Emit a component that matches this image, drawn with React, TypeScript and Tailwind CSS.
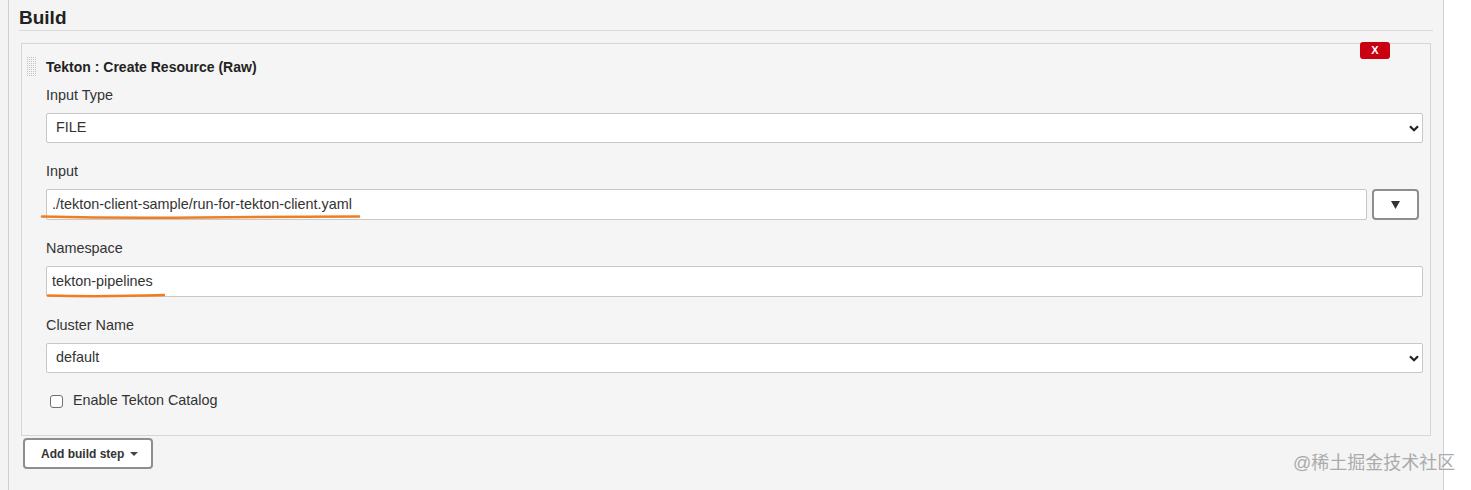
import React from "react";

const font = { fontFamily: '"Liberation Sans", Arial, Helvetica, sans-serif' };

function Chevron() {
  return (
    <svg width="10" height="7" viewBox="0 0 10 7" className="shrink-0">
      <path d="M1 1.2 L5 5.2 L9 1.2" fill="none" stroke="#222" strokeWidth="2.2" strokeLinejoin="miter" />
    </svg>
  );
}

function SelectBox({ value }: { value: string }) {
  return (
    <div className="mt-[9px] h-[30px] flex items-center justify-between bg-white border border-[#c8c8c8] rounded-[2px] pl-[9px] pr-[3px] text-[14.4px] text-[#333]">
      <span>{value}</span>
      <Chevron />
    </div>
  );
}

function Label({ text, first }: { text: string; first?: boolean }) {
  return (
    <div className={`${first ? "mt-[9px]" : "mt-[19px]"} h-[18px] leading-[18px] text-[14.4px] text-[#333]`}>
      {text}
    </div>
  );
}

function DragHandle() {
  const dots: React.ReactNode[] = [];
  for (let r = 0; r < 10; r++) {
    for (let c = 0; c < 5; c++) {
      dots.push(<rect key={`${r}-${c}`} x={c * 2} y={r * 2} width="1" height="1" fill="#c2c2c2" />);
    }
  }
  return (
    <svg width="10" height="20" viewBox="0 0 10 20" className="shrink-0">
      {dots}
    </svg>
  );
}

export default function App() {
  return (
    <div className="relative flex h-[490px] w-[1471px] bg-white overflow-hidden" style={font}>
      <div className="w-[8px] bg-[#f3f3f3]" />
      <div className="w-[1436px] border-l border-r border-[#cfcfcf] bg-[#f4f4f4] px-[10px]">
        <div className="pt-[7px] pb-[1px] leading-[22px] text-[19px] font-bold text-[#222] border-b border-[#d9d9d9]">
          Build
        </div>
        <div className="relative mt-[12px] mx-[2px] border border-[#d6d6d6] bg-[#f5f5f5] pl-[24px] pr-[7px] pt-[13px] pb-[25px]">
          <div className="absolute top-[-2px] right-[40px] w-[30px] h-[17px] bg-[#c80010] rounded-[3px] flex items-center justify-center text-white text-[11px] font-bold leading-none">
            X
          </div>
          <div className="-ml-[19px] h-[20px] flex items-center gap-[9px]">
            <DragHandle />
            <span className="text-[14px] font-bold text-[#222]">Tekton : Create Resource (Raw)</span>
          </div>
          <Label text="Input Type" first />
          <SelectBox value="FILE" />
          <Label text="Input" />
          <div className="mt-[9px] flex h-[31px] pr-[4px]">
            <div className="flex-1 flex items-center bg-white border border-[#c8c8c8] rounded-[2px] pl-[5px] text-[14.4px] text-[#333]">
              ./tekton-client-sample/run-for-tekton-client.yaml
            </div>
            <div className="ml-[5px] w-[47px] flex items-center justify-center bg-white border-2 border-[#8e8e8e] rounded-[4px]">
              <svg width="9" height="8" viewBox="0 0 9 8">
                <path d="M0 0 H9 L4.5 8 Z" fill="#333" />
              </svg>
            </div>
          </div>
          <Label text="Namespace" />
          <div className="mt-[9px] h-[31px] flex items-center bg-white border border-[#c8c8c8] rounded-[2px] pl-[5px] text-[14.4px] text-[#333]">
            tekton-pipelines
          </div>
          <Label text="Cluster Name" />
          <SelectBox value="default" />
          <div className="mt-[19px] h-[18px] flex items-center pl-[4px] gap-[10px]">
            <div className="w-[13px] h-[13px] border border-[#6f6f6f] rounded-[3px] bg-white" />
            <span className="text-[14.4px] text-[#333]">Enable Tekton Catalog</span>
          </div>
        </div>
        <div className="mt-[2px] ml-[4px] w-[130px] h-[31px] flex items-center pl-[16px] gap-[6px] bg-white border-2 border-[#8e8e8e] rounded-[4px] text-[12px] font-bold text-[#333]">
          <span>Add build step</span>
          <svg width="8" height="4" viewBox="0 0 8 4">
            <path d="M0 0 H8 L4 4 Z" fill="#444" />
          </svg>
        </div>
      </div>
      <div className="flex-1 bg-white" />

      <svg className="absolute left-0 top-0 pointer-events-none" width="1471" height="490">
        <path d="M42 216.5 Q120 218.5 200 217.5 T359 216.5" fill="none" stroke="#ef7d22" strokeWidth="2.5" strokeLinecap="round" />
        <path d="M48 295.5 Q100 297 164 295" fill="none" stroke="#ef7d22" strokeWidth="2.5" strokeLinecap="round" />
      </svg>

      <div
        className="absolute left-[1293px] top-[452px] text-[18px] leading-[22px] text-[#ababab] pointer-events-none"
        style={{ fontFamily: '"Liberation Sans", "Noto Sans CJK SC", sans-serif' }}
      >
        @稀土掘金技术社区
      </div>
    </div>
  );
}
